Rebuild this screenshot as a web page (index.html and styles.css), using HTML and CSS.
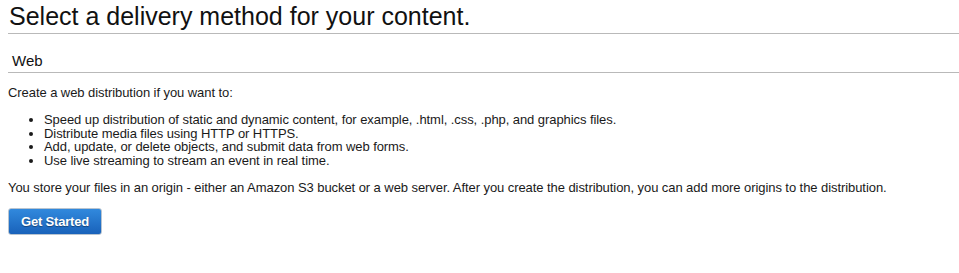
FILE: index.html
```html
<!DOCTYPE html>
<html>
<head>
<meta charset="utf-8">
<link rel="stylesheet" href="styles.css">
</head>
<body>
<div class="page">
  <h1 class="title">Select a delivery method for your content.</h1>
  <h2 class="section">Web</h2>
  <p class="intro">Create a web distribution if you want to:</p>
  <ul class="list">
    <li>Speed up distribution of static and dynamic content, for example, .html, .css, .php, and graphics files.</li>
    <li>Distribute media files using HTTP or HTTPS.</li>
    <li>Add, update, or delete objects, and submit data from web forms.</li>
    <li>Use live streaming to stream an event in real time.</li>
  </ul>
  <p class="note">You store your files in an origin - either an Amazon S3 bucket or a web server. After you create the distribution, you can add more origins to the distribution.</p>
  <button class="btn">Get Started</button>
</div>
</body>
</html>
```

FILE: styles.css
```css
html, body {
  margin: 0;
  padding: 0;
  background: #fff;
}
.page {
  padding-left: 8px;
  font-family: "Liberation Sans", Arial, sans-serif;
  color: #1a1a1a;
  font-size: 13px;
}
.title {
  margin: 2px 0 0 0;
  font-size: 25px;
  line-height: 29px;
  font-weight: normal;
  color: #111;
  padding: 0 0 2px 1px;
  border-bottom: 1px solid #b9b9b9;
}
.section {
  margin: 18px 0 0 0;
  font-size: 15px;
  line-height: 18px;
  font-weight: normal;
  color: #111;
  padding: 0 0 2px 4px;
  border-bottom: 1px solid #b9b9b9;
}
.intro {
  margin: 13px 0 0 0;
  line-height: 14px;
  letter-spacing: -0.07px;
}
.list {
  margin: 13px 0 0 0;
  padding-left: 36px;
  line-height: 13.7px;
  letter-spacing: -0.07px;
}
.note {
  margin: 13px 0 0 0;
  line-height: 14px;
  letter-spacing: -0.07px;
}
.btn {
  display: block;
  margin-top: 13px;
  width: 94px;
  height: 27px;
  border: 1px solid #b8c4d0;
  border-radius: 3px;
  background: linear-gradient(#3189dd, #1962ba);
  color: #fff;
  font-family: "Liberation Sans", Arial, sans-serif;
  font-weight: bold;
  font-size: 13px;
  letter-spacing: -0.2px;
  text-shadow: 0 1px 1px rgba(0,0,0,0.4);
  padding: 0;
  cursor: pointer;
}
```
